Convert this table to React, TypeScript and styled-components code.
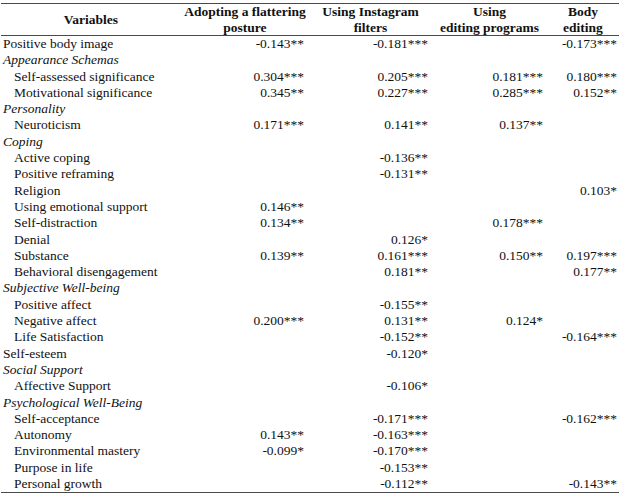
import React from 'react';
import styled, { createGlobalStyle } from 'styled-components';

const GlobalStyle = createGlobalStyle`
    body {
        margin: 0;
        background: #ffffff;
    }
`;

const COLUMNS = '180px 128px 123px 115px 72px';

const Page = styled.div`
    margin: 0;
    padding: 3px 0 0 1px;
    font-family: 'Liberation Serif', serif;
    font-size: 13.5px;
    color: #111111;
`;

const Table = styled.div`
    width: 618px;
    border-top: 1.5px solid #4a4a4a;
    border-bottom: 1.5px solid #4a4a4a;
`;

const HeaderRow = styled.div`
    display: grid;
    grid-template-columns: ${COLUMNS};
    height: 31px;
    border-bottom: 1.5px solid #4a4a4a;
`;

const HeadCell = styled.div`
    display: flex;
    align-items: center;
    justify-content: center;
    text-align: center;
    font-weight: bold;
    line-height: 15.5px;
`;

const Row = styled.div`
    display: grid;
    grid-template-columns: ${COLUMNS};
    height: 16.3px;
    line-height: 16.3px;
`;

const LabelCell = styled.div<{ $indent?: boolean; $italic?: boolean }>`
    padding-left: ${p => (p.$indent ? 13 : 2)}px;
    font-style: ${p => (p.$italic ? 'italic' : 'normal')};
    white-space: nowrap;
`;

const ValueCell = styled.div<{ $pad: number }>`
    padding-right: ${p => p.$pad}px;
    text-align: right;
    white-space: nowrap;
`;

type Entry = {
    label: string;
    kind: 'top' | 'group' | 'item';
    values?: string[];
};

const rows: Entry[] = [
    { label: 'Positive body image', kind: 'top', values: ['-0.143**', '-0.181***', '', '-0.173***'] },
    { label: 'Appearance Schemas', kind: 'group' },
    { label: 'Self-assessed significance', kind: 'item', values: ['0.304***', '0.205***', '0.181***', '0.180***'] },
    { label: 'Motivational significance', kind: 'item', values: ['0.345**', '0.227***', '0.285***', '0.152**'] },
    { label: 'Personality', kind: 'group' },
    { label: 'Neuroticism', kind: 'item', values: ['0.171***', '0.141**', '0.137**', ''] },
    { label: 'Coping', kind: 'group' },
    { label: 'Active coping', kind: 'item', values: ['', '-0.136**', '', ''] },
    { label: 'Positive reframing', kind: 'item', values: ['', '-0.131**', '', ''] },
    { label: 'Religion', kind: 'item', values: ['', '', '', '0.103*'] },
    { label: 'Using emotional support', kind: 'item', values: ['0.146**', '', '', ''] },
    { label: 'Self-distraction', kind: 'item', values: ['0.134**', '', '0.178***', ''] },
    { label: 'Denial', kind: 'item', values: ['', '0.126*', '', ''] },
    { label: 'Substance', kind: 'item', values: ['0.139**', '0.161***', '0.150**', '0.197***'] },
    { label: 'Behavioral disengagement', kind: 'item', values: ['', '0.181**', '', '0.177**'] },
    { label: 'Subjective Well-being', kind: 'group' },
    { label: 'Positive affect', kind: 'item', values: ['', '-0.155**', '', ''] },
    { label: 'Negative affect', kind: 'item', values: ['0.200***', '0.131**', '0.124*', ''] },
    { label: 'Life Satisfaction', kind: 'item', values: ['', '-0.152**', '', '-0.164***'] },
    { label: 'Self-esteem', kind: 'top', values: ['', '-0.120*', '', ''] },
    { label: 'Social Support', kind: 'group' },
    { label: 'Affective Support', kind: 'item', values: ['', '-0.106*', '', ''] },
    { label: 'Psychological Well-Being', kind: 'group' },
    { label: 'Self-acceptance', kind: 'item', values: ['', '-0.171***', '', '-0.162***'] },
    { label: 'Autonomy', kind: 'item', values: ['0.143**', '-0.163***', '', ''] },
    { label: 'Environmental mastery', kind: 'item', values: ['-0.099*', '-0.170***', '', ''] },
    { label: 'Purpose in life', kind: 'item', values: ['', '-0.153**', '', ''] },
    { label: 'Personal growth', kind: 'item', values: ['', '-0.112**', '', '-0.143**'] },
];

// right padding of each value column, so numbers line up as in the source table
const valuePads = [5, 4, 4, 2];

const App = () => {
    return (
        <Page>
            <GlobalStyle />
            <Table>
                <HeaderRow>
                    <HeadCell>Variables</HeadCell>
                    <HeadCell>
                        Adopting a flattering
                        <br />
                        posture
                    </HeadCell>
                    <HeadCell>
                        Using Instagram
                        <br />
                        filters
                    </HeadCell>
                    <HeadCell>
                        Using
                        <br />
                        editing programs
                    </HeadCell>
                    <HeadCell>
                        Body
                        <br />
                        editing
                    </HeadCell>
                </HeaderRow>
                {rows.map(row => (
                    <Row key={row.label}>
                        <LabelCell $indent={row.kind === 'item'} $italic={row.kind === 'group'}>
                            {row.label}
                        </LabelCell>
                        {valuePads.map((pad, i) => (
                            <ValueCell key={i} $pad={pad}>
                                {row.values?.[i] ?? ''}
                            </ValueCell>
                        ))}
                    </Row>
                ))}
            </Table>
        </Page>
    );
};

export default App;
